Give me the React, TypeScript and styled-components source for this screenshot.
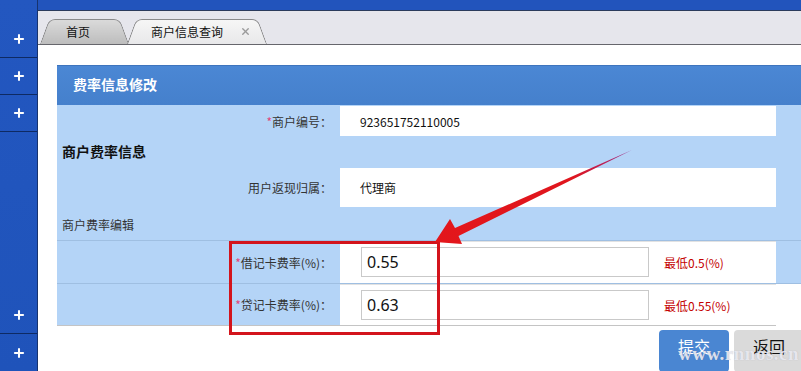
import React from "react";
import styled, { createGlobalStyle } from "styled-components";
import { Plus, X } from "lucide-react";

const GlobalStyle = createGlobalStyle`
  html, body {
    margin: 0;
    padding: 0;
    background: #fff;
  }
  body {
    font-family: "Noto Sans CJK SC", "Noto Sans", sans-serif;
    font-size: 12px;
    color: #222;
  }
  * {
    box-sizing: border-box;
  }
`;

const Frame = styled.div`
  position: relative;
  width: 801px;
  height: 371px;
  overflow: hidden;
  display: flex;
  background: #2254bc;
`;

const Sidebar = styled.nav`
  width: 38px;
  flex: none;
  display: flex;
  flex-direction: column;
  padding-top: 21px;
  background: linear-gradient(#2357c0, #1f53ba);
  border-right: 1px solid #17336e;
`;

const SideItem = styled.div<{ $last?: boolean }>`
  height: 37px;
  display: flex;
  align-items: center;
  justify-content: center;
  color: #fff;
  border-bottom: ${(p) => (p.$last ? "none" : "1px solid #0e2a63")};
`;

const SideSpacer = styled.div`
  flex: 1;
`;

const Main = styled.main`
  flex: 1;
  margin-top: 10px;
  display: flex;
  flex-direction: column;
  background: #fff;
  border-top: 1px solid #2b3b5c;
`;

const TabBar = styled.div`
  height: 34px;
  flex: none;
  display: flex;
  align-items: flex-end;
  padding-left: 2px;
  background: #e6e6ec;
  border-bottom: 1px solid #66666c;
`;

const Tab = styled.div<{ $active?: boolean; $w: number }>`
  position: relative;
  width: ${(p) => p.$w}px;
  height: 25px;
  margin-left: ${(p) => (p.$active ? "-2px" : "0")};
  z-index: ${(p) => (p.$active ? 2 : 1)};
  display: flex;
  align-items: center;
  font-size: 12px;
  color: #111;

  &::before,
  &::after {
    content: "";
    position: absolute;
    top: 0;
    bottom: 0;
    width: 60%;
    border-top: 1px solid #8a8a8a;
    background: ${(p) =>
      p.$active
        ? "linear-gradient(#f6f6f6, #e8e8ea)"
        : "linear-gradient(#dadada, #bdbdbd)"};
  }
  &::before {
    left: 0;
    border-left: 1px solid #7d7d7d;
    border-top-left-radius: 6px;
    transform-origin: bottom left;
    transform: skewX(-20deg);
  }
  &::after {
    right: 0;
    border-right: 1px solid #7d7d7d;
    border-top-right-radius: 6px;
    transform-origin: bottom right;
    transform: skewX(20deg);
  }
`;

const TabLabel = styled.span<{ $pad: number }>`
  position: relative;
  z-index: 1;
  padding-left: ${(p) => p.$pad}px;
  display: flex;
  align-items: center;
  gap: 17px;
`;

const Close = styled.span`
  display: flex;
  color: #9a9a9a;
`;

const Content = styled.div`
  flex: 1;
  padding: 20px 0 0 19px;
`;

const Panel = styled.section`
  display: flex;
  flex-direction: column;
`;

const PanelHeader = styled.h2`
  margin: 0;
  height: 40px;
  display: flex;
  align-items: center;
  padding: 0 0 3px 16px;
  font-size: 14px;
  font-weight: bold;
  color: #fff;
  background: linear-gradient(#4b87d4, #4580cc);
  border-top: 1px solid #3e74bd;
`;

const Row = styled.div<{ $h: number; $rule?: boolean }>`
  height: ${(p) => p.$h}px;
  display: grid;
  grid-template-columns: 283px 436px 1fr;
  background: #b4d4f7;
  border-top: ${(p) => (p.$rule ? "1px solid #9fbfe2" : "none")};
`;

const SectionRow = styled.div<{ $h: number; $bold?: boolean }>`
  height: ${(p) => p.$h}px;
  display: flex;
  align-items: center;
  padding: 0 0 ${(p) => (p.$bold ? "3px" : "0")} 5px;
  background: #b4d4f7;
  font-size: ${(p) => (p.$bold ? "14px" : "12px")};
  font-weight: ${(p) => (p.$bold ? "bold" : "normal")};
  color: ${(p) => (p.$bold ? "#111" : "#333")};
`;

const Label = styled.div`
  display: flex;
  align-items: center;
  justify-content: flex-end;
  padding-right: 8px;
  color: #333;
`;

const Star = styled.span`
  color: #e2467c;
`;

const Value = styled.div<{ $inset?: boolean }>`
  display: flex;
  align-items: center;
  margin: ${(p) => (p.$inset ? "1px 0" : "0")};
  padding-left: 20px;
  background: #fff;
  color: #111;
`;

const RateCell = styled.div`
  display: flex;
  align-items: flex-start;
  padding: 5px 0 0 21px;
  background: #fff;
  border-top: 1px solid #e2e2e2;
`;

const RateInput = styled.input`
  width: 288px;
  height: 30px;
  flex: none;
  padding: 0 5px;
  border: 1px solid #c9c9c9;
  font-family: "Noto Sans", "Noto Sans CJK SC", sans-serif;
  font-size: 16px;
  color: #111;
  outline: none;
`;

const Hint = styled.span`
  padding: 7px 0 0 15px;
  color: #c40000;
  font-size: 12px;
`;

const Strip = styled.div<{ $white?: boolean }>`
  background: ${(p) => (p.$white ? "#fff" : "transparent")};
`;

const BottomRule = styled.div`
  width: 719px;
  height: 1px;
  background: #c4c4c4;
`;

const Buttons = styled.div`
  display: flex;
  gap: 5px;
  padding: 4px 0 0 602px;
`;

const Button = styled.button<{ $primary?: boolean }>`
  width: 70px;
  height: 42px;
  flex: none;
  padding: 6px 0 0;
  display: flex;
  justify-content: center;
  align-items: flex-start;
  border: none;
  border-radius: 4px;
  font-family: "Noto Sans CJK SC", sans-serif;
  font-size: 16px;
  line-height: 20px;
  color: ${(p) => (p.$primary ? "#fff" : "#111")};
  background: ${(p) => (p.$primary ? "#4a86d2" : "#dadada")};
`;

const Highlight = styled.div`
  position: absolute;
  left: 229px;
  top: 241px;
  width: 211px;
  height: 94px;
  border: 3px solid #d3141c;
  pointer-events: none;
`;

const ArrowLayer = styled.svg`
  position: absolute;
  left: 0;
  top: 0;
  pointer-events: none;
`;

const Watermark = styled.div`
  position: absolute;
  left: 678px;
  top: 344px;
  font-family: "Liberation Serif", serif;
  font-weight: bold;
  font-size: 19px;
  line-height: 20px;
  letter-spacing: 0.5px;
  color: rgba(238, 238, 244, 0.9);
  text-shadow: 0 0 1px rgba(110, 110, 140, 0.4);
  pointer-events: none;
`;

const rates = [
  { label: "借记卡费率(%)：", value: "0.55", hint: "最低0.5(%)" },
  { label: "贷记卡费率(%)：", value: "0.63", hint: "最低0.55(%)" },
];

export default function App() {
  return (
    <Frame>
      <GlobalStyle />
      <Sidebar>
        <SideItem><Plus size={14} strokeWidth={3.5} /></SideItem>
        <SideItem><Plus size={14} strokeWidth={3.5} /></SideItem>
        <SideItem><Plus size={14} strokeWidth={3.5} /></SideItem>
        <SideSpacer />
        <SideItem><Plus size={14} strokeWidth={3.5} /></SideItem>
        <SideItem $last><Plus size={14} strokeWidth={3.5} /></SideItem>
      </Sidebar>

      <Main>
        <TabBar>
          <Tab $w={89}>
            <TabLabel $pad={26}>首页</TabLabel>
          </Tab>
          <Tab $w={140} $active>
            <TabLabel $pad={24}>
              商户信息查询
              <Close><X size={11} strokeWidth={3} /></Close>
            </TabLabel>
          </Tab>
        </TabBar>

        <Content>
          <Panel>
            <PanelHeader>费率信息修改</PanelHeader>

            <Row $h={32}>
              <Label><Star>*</Star>商户编号：</Label>
              <Value $inset>923651752110005</Value>
              <Strip />
            </Row>
            <SectionRow $h={30} $bold>商户费率信息</SectionRow>
            <Row $h={41}>
              <Label>用户返现归属：</Label>
              <Value $inset>代理商</Value>
              <Strip />
            </Row>
            <SectionRow $h={32}>商户费率编辑</SectionRow>

            {rates.map((r, i) => (
              <Row key={r.label} $h={i === 0 ? 43 : 42} $rule>
                <Label><Star>*</Star>{r.label}</Label>
                <RateCell>
                  <RateInput defaultValue={r.value} />
                  <Hint>{r.hint}</Hint>
                </RateCell>
                <Strip $white={i === rates.length - 1} />
              </Row>
            ))}
            <BottomRule />

            <Buttons>
              <Button $primary>提交</Button>
              <Button>返回</Button>
            </Buttons>
          </Panel>
        </Content>
      </Main>

      <Highlight />
      <ArrowLayer width={801} height={371} viewBox="0 0 801 371">
        <defs>
          <linearGradient id="arrowFill" x1="435" y1="242" x2="632" y2="150" gradientUnits="userSpaceOnUse">
            <stop offset="0" stopColor="#e3161b" />
            <stop offset="0.7" stopColor="#e0161e" />
            <stop offset="1" stopColor="#9a2a8a" />
          </linearGradient>
        </defs>
        <polygon
          points="435,242 450,219 455,228 632,150 458.5,236 462,244"
          fill="url(#arrowFill)"
        />
      </ArrowLayer>
      <Watermark>www.rnnos.cn</Watermark>
    </Frame>
  );
}
